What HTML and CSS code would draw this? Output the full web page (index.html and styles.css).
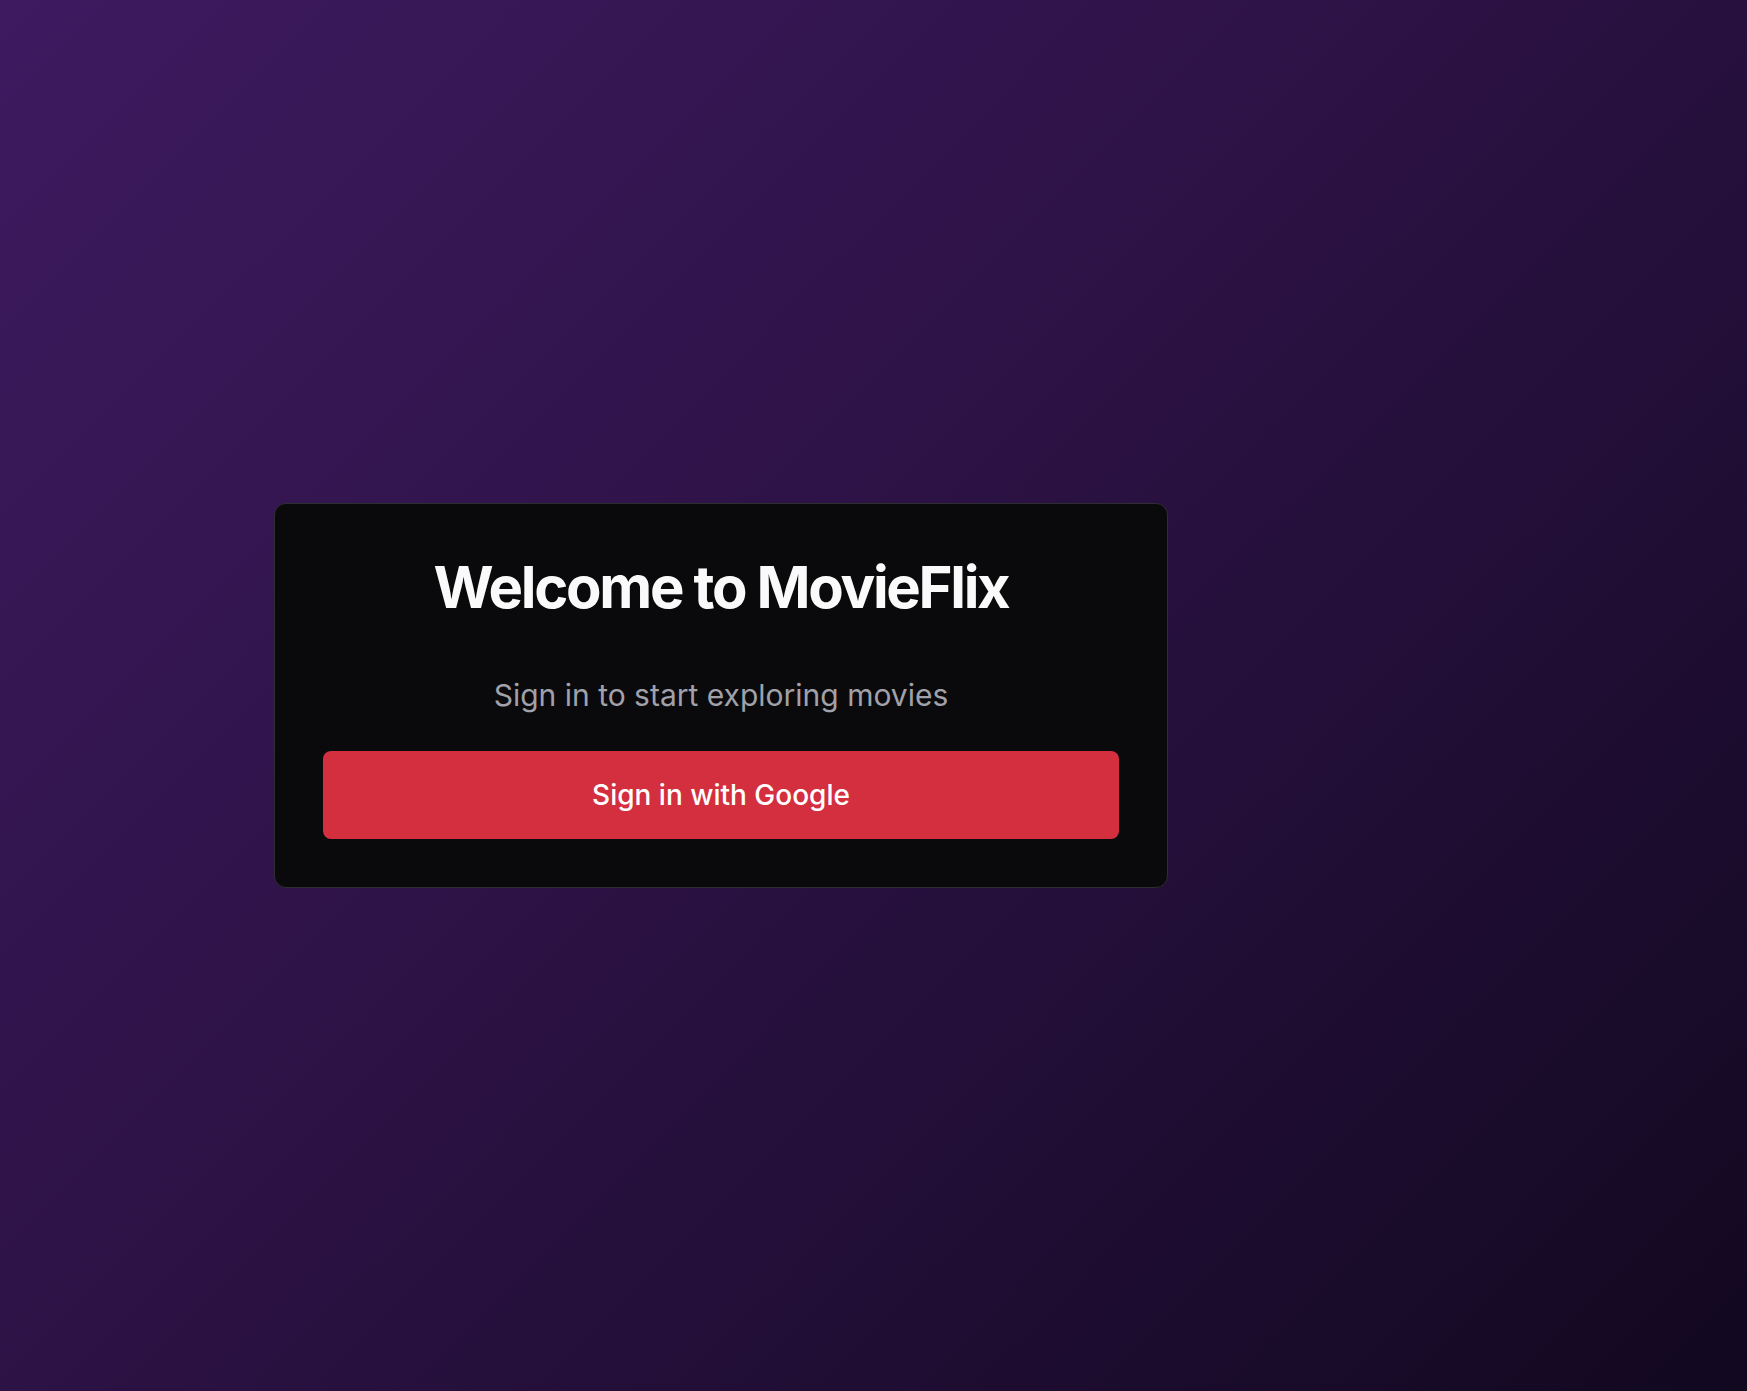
FILE: index.html
```html
<!DOCTYPE html>
<html lang="en">
<head>
<meta charset="utf-8">
<title>MovieFlix</title>
<link rel="stylesheet" href="styles.css">
</head>
<body>
<main class="page">
  <section class="card">
    <h1 class="title">Welcome to MovieFlix</h1>
    <p class="subtitle">Sign in to start exploring movies</p>
    <button class="google-btn" type="button">Sign in with Google</button>
  </section>
</main>
</body>
</html>
```

FILE: styles.css
```css
* {
  box-sizing: border-box;
}

html, body {
  margin: 0;
  padding: 0;
}

body {
  font-family: Inter, "Noto Sans", "Liberation Sans", sans-serif;
  background: linear-gradient(135deg, #3e1a60 0%, #2c1245 45%, #120820 100%);
  min-height: 100vh;
  color: #fafafa;
}

.page {
  min-height: 100vh;
  display: flex;
  align-items: center;
  padding-left: 274px;
}

.card {
  width: 894px;
  background: #0a0a0c;
  border: 1px solid #2e2e31;
  border-radius: 12px;
  padding: 49px 48px 48px;
  display: flex;
  flex-direction: column;
  align-items: center;
}

.title {
  margin: 0;
  font-size: 58px;
  line-height: 1.2;
  font-weight: 700;
  letter-spacing: -0.04em;
  color: #fafafa;
  text-align: center;
}

.subtitle {
  margin: 51px 0 0;
  font-size: 30px;
  line-height: 1.5;
  font-weight: 400;
  color: #a1a1aa;
  text-align: center;
}

.google-btn {
  margin-top: 33px;
  width: 100%;
  height: 88px;
  border: none;
  border-radius: 8px;
  background: #d32f3f;
  color: #ffffff;
  font-family: inherit;
  font-size: 28px;
  font-weight: 500;
  cursor: pointer;
}
```
